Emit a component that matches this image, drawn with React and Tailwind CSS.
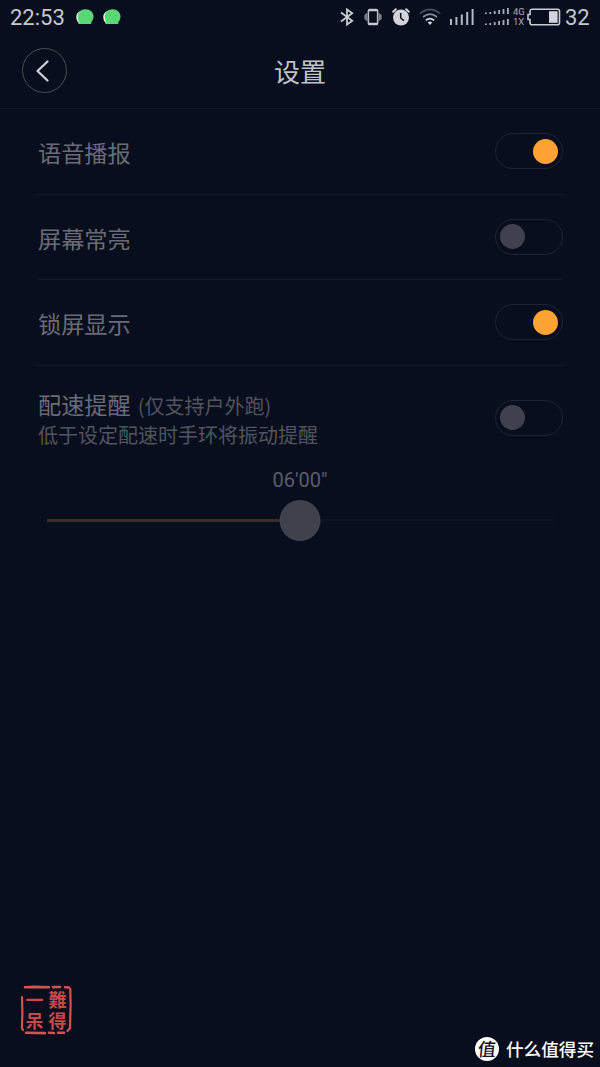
import React, { useState } from "react";

const BluetoothIcon = () => (
  <svg width="14" height="18" viewBox="0 0 14 18" fill="none" stroke="#c9cbd3" strokeWidth="1.8">
    <path d="M1 4.600 12.200 12.800 7 16.600V1.400L12.200 5.200 1 13.400" />
  </svg>
);

const VibrateIcon = () => (
  <svg width="18" height="18" viewBox="0 0 18 18">
    <path d="M3.400 4.500v9L0.400 11V7zM14.600 4.500v9l3-2.500V7z" fill="#7c7f8a" />
    <rect x="4.400" y="1.400" width="9.200" height="15.200" rx="1.200" fill="#080e1d" stroke="#b9bbc4" strokeWidth="1.500" />
    <path d="M5 2.200h8M5 15.800h8" stroke="#c9cbd3" strokeWidth="2" />
  </svg>
);

const AlarmIcon = () => (
  <svg width="18" height="18" viewBox="0 0 18 18" fill="none">
    <circle cx="9" cy="9.500" r="8" fill="#d3d4db" />
    <path d="M1.200 3.800 3.800 1.300M16.800 3.800 14.200 1.300" stroke="#d3d4db" strokeWidth="2" strokeLinecap="round" />
    <path d="M8.700 5v5l3.200 2.600" stroke="#080e1d" strokeWidth="1.500" />
  </svg>
);

const WifiIcon = () => (
  <svg width="22" height="18" viewBox="0 0 22 18" fill="none" strokeWidth="1.800">
    <path d="M0.800 5.600Q11-2.600 21.200 5.600" stroke="#444956" />
    <path d="M4 9Q11 3.200 18 9" stroke="#858893" />
    <path d="M6.900 12.400Q11 8.800 15.100 12.400" stroke="#d3d4db" />
    <path d="M8.700 14.400Q11 12.800 13.300 14.400L11 17z" fill="#d3d4db" />
  </svg>
);

const SignalIcon = () => (
  <svg width="24" height="18" viewBox="0 0 24 18" fill="#b5b7c1">
    <rect x="0" y="11" width="2" height="6" />
    <rect x="5.400" y="9" width="2" height="8" />
    <rect x="10.800" y="6.500" width="2" height="10.500" />
    <rect x="16.200" y="4" width="2" height="13" />
    <rect x="21.600" y="1" width="2" height="16" />
  </svg>
);

const bars = [1.5, 2, 3, 4, 5, 6];

const DualSignalIcon = () => (
  <svg width="24" height="18" viewBox="0 0 24 18" fill="#a9acb7">
    {[6, 17].map((base) =>
      bars.map((h, i) => (
        <rect key={`${base}-${i}`} x={i * 4.4} y={base - h} width="1.8" height={h} />
      ))
    )}
  </svg>
);

const BatteryIcon = () => (
  <svg width="34" height="18" viewBox="0 0 34 18" fill="none">
    <path d="M5 1.200h25.500a2 2 0 0 1 2 2v11.600a2 2 0 0 1-2 2H5a2 2 0 0 1-2-2V11.500H1V6.500h2V3.200a2 2 0 0 1 2-2z" stroke="#c9cbd3" strokeWidth="1.600" />
    <rect x="22" y="3.200" width="8.600" height="11.600" fill="#d3d4db" />
  </svg>
);

const ChatDot = () => (
  <svg width="18" height="16" viewBox="0 0 18 16">
    <path d="M6 1.600C2 2.400 0.200 5.400 0.300 8.400c0.100 2.400 1 4 2.200 5v1.400h3z" fill="#e4f5e8" />
    <path d="M9.600 0.300c4.600 0 7.900 3.200 7.900 7.300 0 2.500-1 4.300-2.200 5.600v1.800H3.400v-1.800C2.300 11.900 1.700 9.800 1.700 7.600c0-4.100 3.300-7.300 7.900-7.300z" fill="#5bd876" />
    <path d="M6.500 6.200h1.300M11.700 6.200h1.300" stroke="#45bd60" strokeWidth="1" />
  </svg>
);

const StatusBar = () => (
  <div className="flex h-[34px] shrink-0 items-center pl-[10px] pr-[10px] font-['Roboto',sans-serif] text-[22px] leading-none text-[#c6c8d0]">
    <span className="w-[66px] pt-px">22:53</span>
    <div className="flex gap-[9px]">
      <ChatDot />
      <ChatDot />
    </div>
    <div className="ml-auto flex items-center">
      <BluetoothIcon />
      <div className="ml-[10px]"><VibrateIcon /></div>
      <div className="ml-[10px]"><AlarmIcon /></div>
      <div className="ml-[9px]"><WifiIcon /></div>
      <div className="ml-[9px]"><SignalIcon /></div>
      <div className="ml-[11px]"><DualSignalIcon /></div>
      <div className="ml-[4px] flex w-[14px] flex-col text-[9.500px] leading-[10px] text-[#a9acb7]">
        <span>4G</span>
        <span>1X</span>
      </div>
      <BatteryIcon />
      <span className="ml-[4px] w-[25px] pt-px">32</span>
    </div>
  </div>
);

const Toggle = ({ checked, onChange }) => (
  <button
    type="button"
    role="switch"
    aria-checked={checked}
    onClick={onChange}
    className={`flex h-9 w-[68px] shrink-0 items-center rounded-full border border-[#202533] px-[4px] ${
      checked ? "justify-end" : "justify-start"
    }`}
  >
    <span className={`size-[25px] rounded-full ${checked ? "bg-[#ffa334]" : "bg-[#3f424e]"}`} />
  </button>
);

const SettingRow = ({ label, checked, onChange }) => (
  <div className="flex h-[85.600px] items-center justify-between border-b border-[#161b29]">
    <span className="pl-px pt-[3px] text-[23.200px] leading-none text-[#696c77]">{label}</span>
    <Toggle checked={checked} onChange={onChange} />
  </div>
);

const PaceSlider = ({ value }) => (
  <div className="px-[9.500px]">
    <div className="text-center font-['Roboto',sans-serif] text-[20px] leading-6 text-[#5b5e6a]">06'00"</div>
    <div className="relative mt-[8px] flex h-[41px] items-center">
      <div className="h-[2.500px] bg-[#3a2d2a]" style={{ width: `${value}%` }} />
      <div className="h-[2px] flex-1 bg-[#0e1423]" />
      <div className="absolute size-[41px] -translate-x-1/2 rounded-full bg-[#3f424d]" style={{ left: `${value}%` }} />
    </div>
  </div>
);

const Seal = () => (
  <div className="relative h-[50px] w-[52px] font-['Noto_Sans_CJK_TC',sans-serif] text-[18px] font-bold leading-[18px] text-[#c9484c]">
    <svg className="absolute inset-0" width="52" height="50" viewBox="0 0 52 50" fill="none" stroke="#cf5552" strokeLinecap="round">
      <path d="M5 2.200 15 1.900 29 2.300M33 2.100 40 2M45 2.200 49 2.500" strokeWidth="2.600" />
      <path d="M50.300 4 50.600 20 50 43 47.500 46" strokeWidth="2.200" />
      <path d="M2 12 2.400 28 1.900 43 3 45" strokeWidth="2.200" />
      <path d="M6 47.800 25 48.100M29 47.700 34 48M38 47.800h6" strokeWidth="2.600" />
    </svg>
    <div className="grid grid-cols-2 gap-y-[3px] px-[3px] pt-[5px] text-center">
      <span>一</span>
      <span>難</span>
      <span>呆</span>
      <span>得</span>
    </div>
  </div>
);

const Watermark = () => (
  <div className="flex items-center gap-[7px] text-white">
    <span className="flex size-6 items-center justify-center rounded-full bg-white text-[18px] font-medium leading-none text-[#111522]">
      <span className="-skew-x-6 -translate-y-px">值</span>
    </span>
    <span className="text-[17.600px] font-medium leading-6">什么值得买</span>
  </div>
);

export default function App() {
  const [settings, setSettings] = useState({
    voice: true,
    screenOn: false,
    lockScreen: true,
    pace: false,
  });

  const toggle = (key) => setSettings((prev) => ({ ...prev, [key]: !prev[key] }));

  return (
    <div className="flex h-[1067px] w-[600px] flex-col overflow-hidden bg-[#080e1d] font-['Noto_Sans_CJK_SC',sans-serif]">
      <StatusBar />

      {/* Header */}
      <header className="grid h-[75px] shrink-0 grid-cols-[1fr_auto_1fr] items-center border-b border-[#141928] px-[22px]">
        <button
          type="button"
          aria-label="返回"
          className="mb-px flex size-[45px] items-center justify-center rounded-full border-[1.500px] border-[#4a4d58] pr-[4px]"
        >
          <svg width="13" height="22" viewBox="0 0 13 22" fill="none" stroke="#d3d4db" strokeWidth="2.200" strokeLinecap="round" strokeLinejoin="round">
            <path d="M11.500 1.500 1.500 11l10 9.500" />
          </svg>
        </button>
        <h1 className="text-[26px] leading-none text-[#c0c2ca]">设置</h1>
      </header>

      {/* Settings */}
      <main className="px-[37px]">
        <SettingRow label="语音播报" checked={settings.voice} onChange={() => toggle("voice")} />
        <SettingRow label="屏幕常亮" checked={settings.screenOn} onChange={() => toggle("screenOn")} />
        <SettingRow label="锁屏显示" checked={settings.lockScreen} onChange={() => toggle("lockScreen")} />
        <div className="flex h-[102px] items-center justify-between pt-[2px]">
          <div className="pl-px pt-[4px]">
            <div className="flex items-baseline gap-[7px] leading-[29px]">
              <span className="text-[23.200px] text-[#696c77]">配速提醒</span>
              <span className="text-[20px] text-[#50545f]">(仅支持户外跑)</span>
            </div>
            <p className="text-[20px] leading-[29px] text-[#50545f]">低于设定配速时手环将振动提醒</p>
          </div>
          <Toggle checked={settings.pace} onChange={() => toggle("pace")} />
        </div>
        <PaceSlider value={50} />
      </main>

      <footer className="mt-auto flex items-end justify-between pb-[6px] pl-5 pr-[6px]">
        <div className="pb-[26px]"><Seal /></div>
        <Watermark />
      </footer>
    </div>
  );
}
